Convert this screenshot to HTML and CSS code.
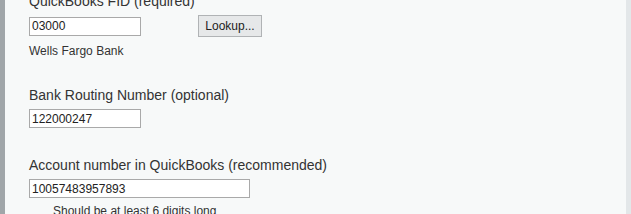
FILE: index.html
```html
<!DOCTYPE html>
<html>
<head>
  <title>Bank Settings</title>
  <link rel="stylesheet" href="styles.css">
</head>
<body>
  <div class="page">
    <div class="rail"></div>
    <div class="content">
      <div class="field">
        <label for="fid">QuickBooks FID (required)</label>
        <div class="lookup-row">
          <input type="text" id="fid" class="short" value="03000">
          <button class="lookup-button">Lookup...</button>
        </div>
        <div class="note">Wells Fargo Bank</div>
      </div>
      <div class="field">
        <label for="routing">Bank Routing Number (optional)</label>
        <input type="text" id="routing" class="short" value="122000247">
      </div>
      <div class="field">
        <label for="account">Account number in QuickBooks (recommended)</label>
        <input type="text" id="account" class="long" value="10057483957893">
        <div class="hint">Should be at least 6 digits long</div>
      </div>
    </div>
    <div class="scrollbar"></div>
  </div>
</body>
</html>
```

FILE: styles.css
```css
body {
  font-family: 'Liberation Sans', Arial, sans-serif;
  margin: 0;
  padding: 0;
  background-color: #f7f9f9;
  color: #333333;
  overflow: hidden;
}
.page {
  display: flex;
  height: 214px;
  overflow: hidden;
}
.rail {
  width: 5px;
  flex-shrink: 0;
  background-color: #a0a6a9;
}
.content {
  flex-grow: 1;
  padding-left: 24px;
  margin-top: -7px;
}
.scrollbar {
  width: 5px;
  flex-shrink: 0;
  background-color: #e3e7e9;
}
.field {
  margin-bottom: 29px;
}
.field label {
  display: block;
  font-size: 14px;
  margin-bottom: 6px;
}
.field input {
  display: block;
  box-sizing: border-box;
  height: 19px;
  padding: 0 2px;
  border: 1px solid #a9a9a9;
  background-color: #ffffff;
  font-family: 'Liberation Sans', Arial, sans-serif;
  font-size: 12px;
  color: #222222;
  outline: none;
}
.field input.short {
  width: 112px;
}
.field input.long {
  width: 221px;
}
.lookup-row {
  display: flex;
  align-items: center;
  height: 22px;
}
.lookup-button {
  margin-left: 57px;
  width: 64px;
  height: 22px;
  background-color: #e6e8e9;
  border: 1px solid #b0b3b5;
  border-radius: 0;
  font-family: 'Liberation Sans', Arial, sans-serif;
  font-size: 12px;
  color: #222222;
  padding: 0;
}
.note {
  font-size: 12px;
  margin-top: 7px;
}
.hint {
  font-size: 12px;
  margin-top: 6px;
  padding-left: 24px;
}
```
